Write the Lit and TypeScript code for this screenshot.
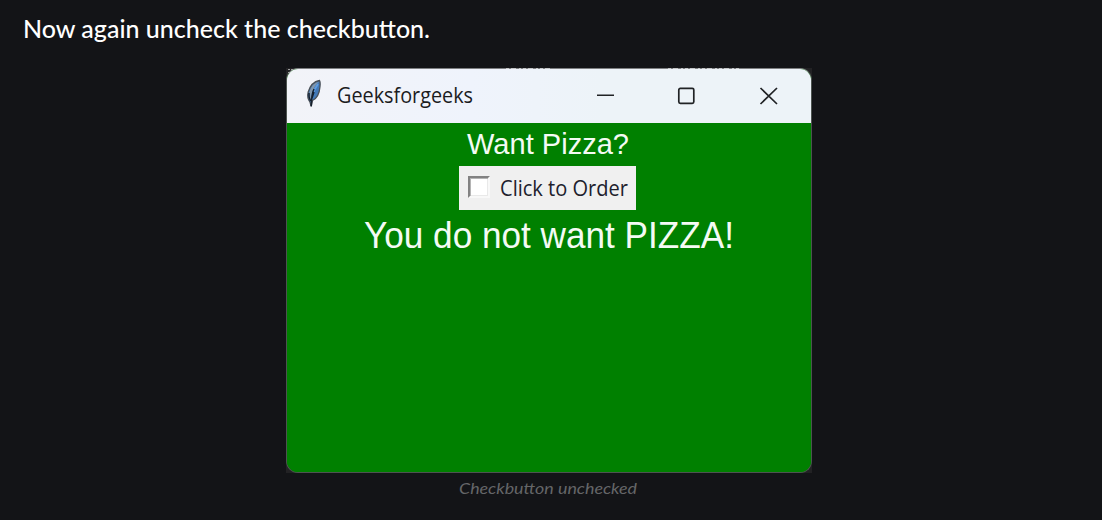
import { LitElement, html, css, svg } from "lit";
import { customElement, property } from "lit/decorators.js";

/** One line of text set to an exact advance width. */
@customElement("fit-text")
class FitText extends LitElement {
  @property() text = "";
  @property({ type: Number }) width = 100;
  @property({ type: Number }) height = 30;
  @property({ type: Number }) base = 20;
  static styles = css`
    :host { display: block; }
    svg { display: block; overflow: visible; }
    text { fill: currentColor; }
  `;
  render() {
    return html`<svg width=${this.width} height=${this.height}>
      ${svg`<text x="0" y=${this.base} textLength=${this.width} lengthAdjust="spacingAndGlyphs">${this.text}</text>`}
    </svg>`;
  }
}

@customElement("tk-window")
class TkWindow extends LitElement {
  static styles = css`
    :host { display: block; position: relative; width: 526px; height: 405px; background: #222224; }
    .specks { position: absolute; left: 0; top: 0; }
    .frame {
      box-sizing: border-box; width: 526px; height: 405px; border: 1px solid #4d5450;
      border-top-color: #7d7f81; border-radius: 12px; overflow: hidden; background: #008000;
    }
    .bar {
      display: flex; align-items: flex-start; height: 54px;
      background: linear-gradient(90deg, #f2f3f8, #eff3fc 35%, #edf3f8 60%);
      color: #1c1c1e;
    }
    .feather { margin: 10px 0 0 17px; flex: none; }
    .title { margin: 9px 0 0 13px; font: 21px "Open Sans", sans-serif; }
    .controls { display: flex; margin: 17px 32px 0 auto; }
    .body { display: flex; flex-direction: column; align-items: center; height: 349px; background: #008000; color: #f4fbf4; padding-right: 3px; }
    .question { margin: 5px 0 0 2px; font: 29.5px "Liberation Sans", sans-serif; }
    .check {
      box-sizing: border-box; display: flex; width: 177px; height: 44px; margin-top: 4px; padding: 10px 8px;
      background: #f0f0f0; color: #20202c; gap: 10px;
    }
    .box {
      box-sizing: border-box; width: 22px; height: 22px; margin-left: 1px; background: #fff;
      border: 2px solid; border-color: #828282 #f8f8f8 #f8f8f8 #828282;
      box-shadow: inset 1px 1px 0 #b4b4b4, inset -1px -1px 0 #e9e9e9;
    }
    .label { font: 21px "Open Sans", sans-serif; }
    .answer { margin: 5px 0 0 4px; font: 36px "Liberation Sans", sans-serif; }
  `;
  render() {
    return html`<div class="frame">
      <div class="bar">
        <svg class="feather" width="20" height="30" viewBox="0 0 20 30">
          <path d="M15.5 1.5C10 2.5 6 7 4.200 13C3.200 17 4 20.500 6 23L7.200 27.500L8.500 21.500C13 19.500 15.500 14 16 7.500Q16.500 3 15.500 1.500Z" fill="#4279b8" stroke="#4b5158" stroke-width="1.300"/>
          <path d="M15 3C11 6 9 10 8 14L6.500 21C4 17 5 11 9 6Q12 3 15 3Z" fill="#8095aa"/>
          <path d="M14 5C11 9 9.500 12 8.500 16" fill="none" stroke="#5d9ce2" stroke-width="2"/>
          <path d="M10 10C8 14 7.500 18 7.200 27M5 14Q4.500 18 6.500 22M10 13L8 19" fill="none" stroke="#15202e" stroke-width="1.500"/>
        </svg>
        <fit-text class="title" text="Geeksforgeeks" width="136" height="35" base="25"></fit-text>
        <svg class="controls" width="182" height="20" viewBox="0 0 182 20" fill="none" stroke="#202225" stroke-width="1.700">
          <path d="M0 9.300H17" stroke-width="1.400"/>
          <rect x="81.800" y="2.300" width="15" height="15" rx="1.500"/>
          <path d="M163.500 2L180 18M180 2L163.500 18"/>
        </svg>
      </div>
      <div class="body">
        <fit-text class="question" text="Want Pizza?" width="162" height="34" base="26"></fit-text>
        <div class="check">
          <span class="box"></span>
          <fit-text class="label" text="Click to Order" width="128" height="24" base="20"></fit-text>
        </div>
        <fit-text class="answer" text="You do not want PIZZA!" width="370" height="44" base="33"></fit-text>
      </div>
    </div>
    <svg class="specks" width="526" height="6" fill="none" stroke="#c4c6c8">
      <path d="M220 .5H264M382 .5H454" stroke-dasharray="3 2 5 3 2 2"/>
      <path d="M2 1.500H8M2 4.500H4" stroke-dasharray="2 1" stroke="#a0a0a0"/>
    </svg>`;
  }
}

@customElement("app-root")
class AppRoot extends LitElement {
  static styles = css`
    :host { display: block; box-sizing: border-box; height: 520px; background: #131417; overflow: hidden; }
    .lead { padding: 11px 0 0 22.5px; color: #fff; font: 500 24.5px Lato, sans-serif; }
    figure { display: flex; flex-direction: column; align-items: center; margin: 17px 5px 0 0; }
    .caption { margin: 3px 1px 0 0; color: #656668; font: italic 16px Lato, sans-serif; }
  `;
  render() {
    return html`
      <fit-text class="lead" text="Now again uncheck the checkbutton." width="407" height="40" base="27"></fit-text>
      <figure>
        <tk-window></tk-window>
        <fit-text class="caption" text="Checkbutton unchecked" width="178" height="24" base="18"></fit-text>
      </figure>
    `;
  }
}
